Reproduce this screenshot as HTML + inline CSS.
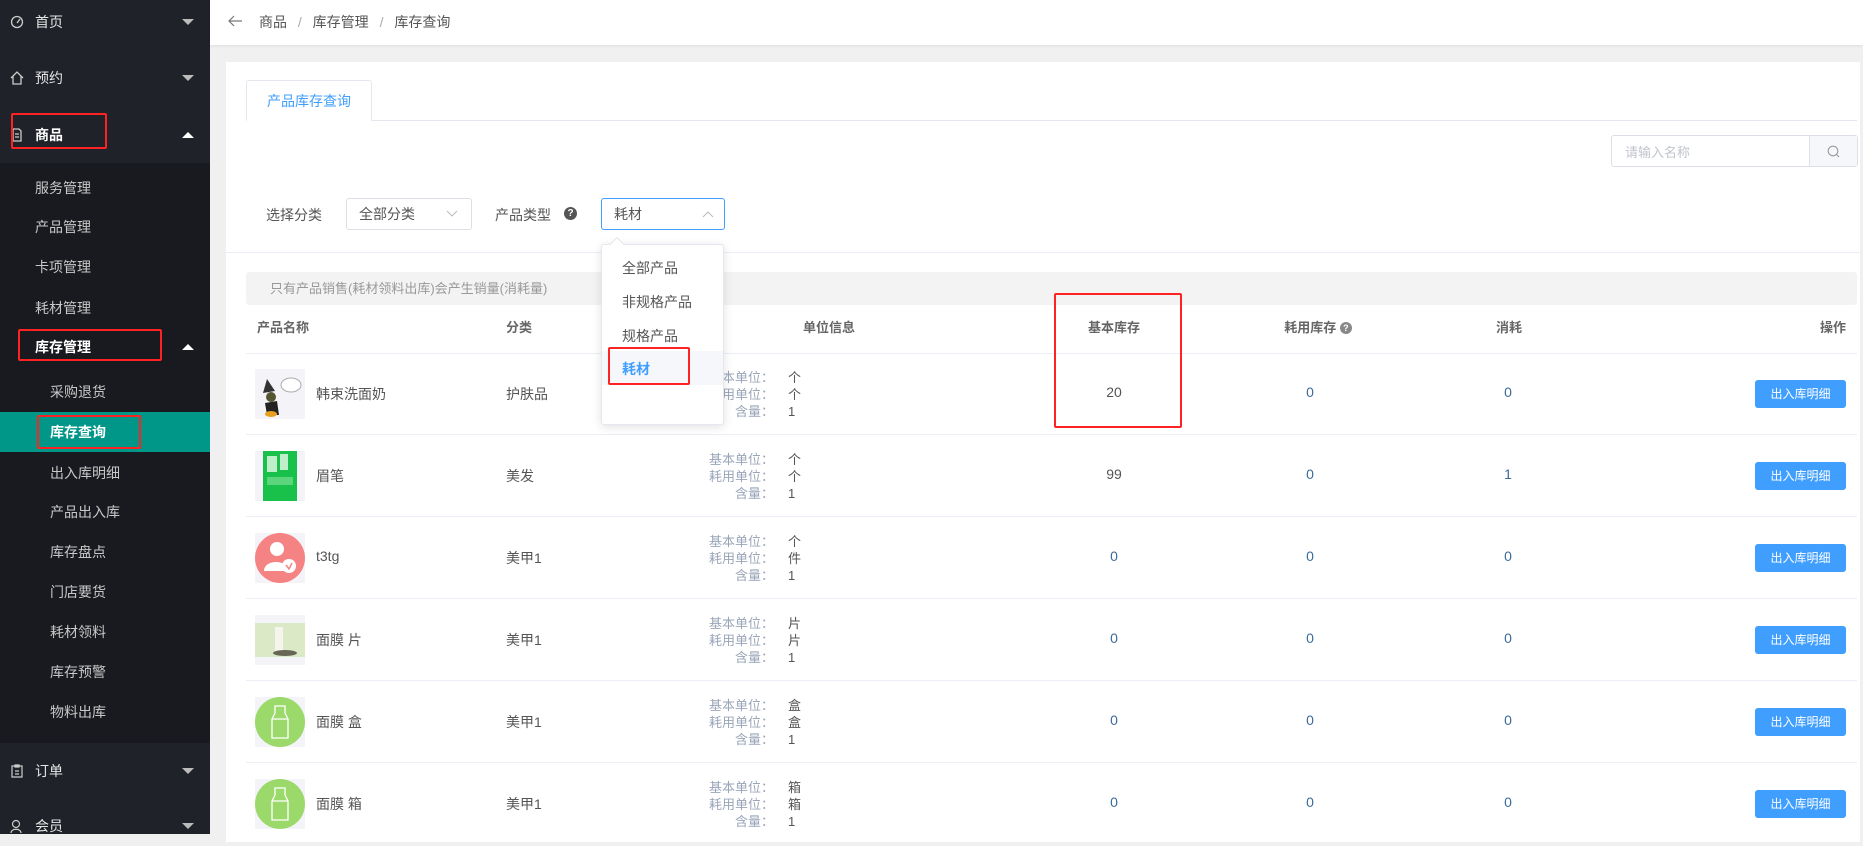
<!DOCTYPE html>
<html><head><meta charset="utf-8"><style>
*{margin:0;padding:0;box-sizing:border-box}
body{width:1863px;height:834px;overflow:hidden;background:#f0f0f0;font-family:"Liberation Sans","Noto Sans CJK SC",sans-serif;font-size:14px;color:#555;position:relative}
.abs{position:absolute}
#side{position:absolute;left:0;top:0;width:210px;height:834px;background:#20222a}
.mi{position:absolute;left:0;width:210px;height:40px;line-height:40px;color:#e6e6e6;font-size:14px}
.mi .t{position:absolute;left:35px}
.mi .ic{position:absolute;left:10px;top:13px;width:14px;height:14px}
.tri{position:absolute;right:16px;top:17px;width:0;height:0;border-left:6px solid transparent;border-right:6px solid transparent;border-top:6px solid #bbb}
.tri.up{border-top:none;border-bottom:6px solid #fff}
#sub{position:absolute;left:0;top:163px;width:210px;height:580px;background:#191a1f}
.si{position:absolute;left:35px;color:#c8c8c8;font-size:14px;height:40px;line-height:40px}
.ssi{position:absolute;left:50px;color:#c8c8c8;font-size:14px;height:40px;line-height:40px}
.red{position:absolute;border:2px solid #f22;border-radius:2px}
#top{position:absolute;left:210px;top:0;right:0;height:45px;background:#fff;box-shadow:0 1px 3px rgba(0,0,0,.08)}
#card{position:absolute;left:226px;top:62px;width:1634px;height:780px;background:#fff;overflow:hidden}
.th{position:absolute;top:257px;font-size:13px;color:#666;font-weight:bold;line-height:18px}
.row{position:absolute;left:20px;width:1611px;height:82px;border-bottom:1px solid #ebeef5}
.cell{position:absolute;font-size:14px;color:#555}
.btn{position:absolute;left:1509px;top:27px;width:91px;height:28px;background:#409eff;color:#fff;font-size:12px;text-align:center;line-height:28px;border-radius:3px}
.ui{position:absolute;left:416px;top:16px;font-size:13px;line-height:17px;color:#9aa5b8;text-align:right;width:112px}
.uv{position:absolute;left:542px;top:16px;font-size:13px;line-height:17px;color:#555}
.img{position:absolute;left:9px;top:16px;width:50px;height:50px;background:#f5f6fa;overflow:hidden}
.num{position:absolute;top:31px;font-size:14px;width:60px;text-align:center}
</style></head><body>
<div id="side">
  <div class="mi" style="top:2px"><svg class="ic" viewBox="0 0 14 14"><circle cx="7" cy="7" r="5.5" fill="none" stroke="#ccc" stroke-width="1.3"/><path d="M7 8 L10 4" stroke="#ccc" stroke-width="1.3"/></svg><span class="t">首页</span><span class="tri"></span></div>
  <div class="mi" style="top:58px"><svg class="ic" viewBox="0 0 14 14"><path d="M1 7 L7 1 L13 7 M3 5 V13 H11 V5" fill="none" stroke="#ccc" stroke-width="1.3"/></svg><span class="t">预约</span><span class="tri"></span></div>
  <div class="mi" style="top:115px;color:#fff;font-weight:bold"><svg class="ic" viewBox="0 0 14 14"><path d="M3 1 H9 L11 3 V13 H3 Z M5 6 H9 M5 9 H9" fill="none" stroke="#ccc" stroke-width="1.3"/></svg><span class="t">商品</span><span class="tri up"></span></div>
  <div id="sub">
    <div class="si" style="top:5px">服务管理</div>
    <div class="si" style="top:44px">产品管理</div>
    <div class="si" style="top:84px">卡项管理</div>
    <div class="si" style="top:125px">耗材管理</div>
    <div class="si" style="top:164px;color:#fff;font-weight:bold">库存管理</div>
    <span class="tri up" style="top:181px"></span>
    <div class="ssi" style="top:209px">采购退货</div>
    <div style="position:absolute;left:0;top:249px;width:210px;height:40px;background:#009688"></div>
    <div class="ssi" style="top:249px;color:#fff;font-weight:bold">库存查询</div>
    <div class="ssi" style="top:290px">出入库明细</div>
    <div class="ssi" style="top:329px">产品出入库</div>
    <div class="ssi" style="top:369px">库存盘点</div>
    <div class="ssi" style="top:409px">门店要货</div>
    <div class="ssi" style="top:449px">耗材领料</div>
    <div class="ssi" style="top:489px">库存预警</div>
    <div class="ssi" style="top:529px">物料出库</div>
  </div>
  <div class="mi" style="top:751px"><svg class="ic" viewBox="0 0 14 14"><path d="M2 2 H12 V13 H2 Z M5 1 H9 V3 H5 Z M5 7 H9 M5 10 H9" fill="none" stroke="#ccc" stroke-width="1.2"/></svg><span class="t">订单</span><span class="tri"></span></div>
  <div class="mi" style="top:806px"><svg class="ic" viewBox="0 0 14 14"><circle cx="6" cy="5" r="3.5" fill="none" stroke="#ccc" stroke-width="1.2"/><path d="M1 14 C1 9 11 9 11 14" fill="none" stroke="#ccc" stroke-width="1.2"/></svg><span class="t">会员</span><span class="tri"></span></div>
</div>
<div class="red" style="left:11px;top:113px;width:96px;height:36px"></div>
<div class="red" style="left:18px;top:329px;width:144px;height:32px"></div>
<div class="red" style="left:37px;top:415px;width:104px;height:34px"></div>

<div id="top">
  <svg class="abs" style="left:17px;top:14px" width="16" height="14" viewBox="0 0 16 14"><path d="M15 7 H2 M7 2 L2 7 L7 12" fill="none" stroke="#777" stroke-width="1.2"/></svg>
  <div class="abs" style="left:49px;top:12px;font-size:14px;color:#555">商品 <span style="color:#aaa;margin:0 7px">/</span> 库存管理 <span style="color:#aaa;margin:0 7px">/</span> 库存查询</div>
</div>

<div id="card">
  <div class="abs" style="left:20px;top:18px;width:126px;height:41px;border:1px solid #e4e7ed;border-bottom:1px solid #fff;border-radius:3px 3px 0 0;background:#fff;z-index:2;color:#409eff;font-size:14px;text-align:center;line-height:40px">产品库存查询</div>
  <div class="abs" style="left:20px;top:58px;width:1611px;height:1px;background:#e4e7ed"></div>
  <div class="abs" style="left:1385px;top:73px;width:247px;height:32px;border:1px solid #dcdfe6;border-radius:3px"></div>
  <div class="abs" style="left:1399px;top:80px;font-size:13px;color:#c0c4cc">请输入名称</div>
  <div class="abs" style="left:1583px;top:74px;width:48px;height:30px;background:#f5f7fa;border-left:1px solid #dcdfe6"></div>
  <svg class="abs" style="left:1601px;top:83px" width="13" height="13" viewBox="0 0 13 13"><circle cx="6" cy="6" r="4.8" fill="none" stroke="#999" stroke-width="1.1"/><path d="M9.5 9.5 L12 12" stroke="#999" stroke-width="1.1"/></svg>

  <div class="abs" style="left:40px;top:143px;font-size:14px;color:#555">选择分类</div>
  <div class="abs" style="left:120px;top:136px;width:126px;height:32px;border:1px solid #dcdfe6;border-radius:3px;padding-left:12px;line-height:30px;font-size:14px">全部分类</div>
  <svg class="abs" style="left:220px;top:148px" width="12" height="8" viewBox="0 0 12 8"><path d="M1 1 L6 6 L11 1" fill="none" stroke="#bbb" stroke-width="1"/></svg>
  <div class="abs" style="left:269px;top:143px;font-size:14px;color:#555">产品类型</div>
  <div class="abs" style="left:338px;top:145px;width:13px;height:13px;border-radius:50%;background:#555;color:#fff;font-size:10px;text-align:center;line-height:13px;font-weight:bold">?</div>
  <div class="abs" style="left:375px;top:136px;width:124px;height:32px;border:1px solid #409eff;border-radius:3px;padding-left:12px;line-height:30px;font-size:14px">耗材</div>
  <svg class="abs" style="left:476px;top:148px" width="12" height="8" viewBox="0 0 12 8"><path d="M1 7 L6 2 L11 7" fill="none" stroke="#bbb" stroke-width="1"/></svg>

  <div class="abs" style="left:0;top:190px;width:1634px;height:1px;background:#ebeef5"></div>
  <div class="abs" style="left:20px;top:210px;width:1611px;height:33px;background:#f3f3f3;border-radius:3px;font-size:13px;color:#999;line-height:33px;padding-left:24px">只有产品销售(耗材领料出库)会产生销量(消耗量)</div>

  <div class="th" style="left:31px">产品名称</div>
  <div class="th" style="left:280px">分类</div>
  <div class="th" style="left:573px;width:60px;text-align:center">单位信息</div>
  <div class="th" style="left:858px;width:60px;text-align:center">基本库存</div>
  <div class="th" style="left:1052px;width:80px;text-align:center">耗用库存 <span style="display:inline-block;width:12px;height:12px;border-radius:50%;background:#888;color:#fff;font-size:9px;line-height:12px;text-align:center;vertical-align:1px">?</span></div>
  <div class="th" style="left:1263px;width:40px;text-align:center">消耗</div>
  <div class="th" style="left:1580px;width:40px;text-align:right">操作</div>
  <div class="abs" style="left:20px;top:291px;width:1611px;height:1px;background:#ebeef5"></div>

  <div class="row" style="top:291px">
    <div class="img"><svg width="50" height="50" viewBox="0 0 50 50"><rect width="50" height="50" fill="#f4f4f8"/><path d="M12 10 L20 22 L8 24 Z" fill="#333"/><circle cx="16" cy="28" r="5" fill="#553"/><path d="M10 34 L22 32 L24 46 L12 46 Z" fill="#222"/><ellipse cx="16" cy="45" rx="6" ry="3" fill="#e8a020"/><ellipse cx="36" cy="16" rx="10" ry="7" fill="#fff" stroke="#aaa"/></svg></div>
    <div class="cell" style="left:70px;top:31px">韩束洗面奶</div>
    <div class="cell" style="left:260px;top:31px">护肤品</div>
    <div class="ui">基本单位：<br>耗用单位：<br>含量：</div><div class="uv">个<br>个<br>1</div>
    <div class="num" style="left:838px;color:#555">20</div>
    <div class="num" style="left:1034px;color:#3a6b9a">0</div>
    <div class="num" style="left:1232px;color:#3a6b9a">0</div>
    <div class="btn">出入库明细</div>
  </div>
  <div class="row" style="top:373px">
    <div class="img"><svg width="50" height="50" viewBox="0 0 50 50"><rect width="50" height="50" fill="#f4f4f8"/><rect x="8" y="0" width="34" height="50" fill="#19c04a"/><rect x="12" y="5" width="10" height="16" fill="#bfeecb"/><rect x="25" y="3" width="8" height="16" fill="#bfeecb"/><rect x="12" y="26" width="26" height="8" fill="#5bd67c"/></svg></div>
    <div class="cell" style="left:70px;top:31px">眉笔</div>
    <div class="cell" style="left:260px;top:31px">美发</div>
    <div class="ui">基本单位：<br>耗用单位：<br>含量：</div><div class="uv">个<br>个<br>1</div>
    <div class="num" style="left:838px;color:#555">99</div>
    <div class="num" style="left:1034px;color:#3a6b9a">0</div>
    <div class="num" style="left:1232px;color:#3a6b9a">1</div>
    <div class="btn">出入库明细</div>
  </div>
  <div class="row" style="top:455px">
    <div class="img"><svg width="50" height="50" viewBox="0 0 50 50"><rect width="50" height="50" fill="#f4f4f8"/><circle cx="25" cy="25" r="25" fill="#f68383"/><circle cx="22" cy="16" r="7" fill="#fff"/><path d="M9 38 C9 26 33 26 33 38 Z" fill="#fff"/><circle cx="34" cy="33" r="7" fill="#fff"/><path d="M31 32 L34 36 L37 30" fill="none" stroke="#f68383" stroke-width="1.5"/></svg></div>
    <div class="cell" style="left:70px;top:31px">t3tg</div>
    <div class="cell" style="left:260px;top:31px">美甲1</div>
    <div class="ui">基本单位：<br>耗用单位：<br>含量：</div><div class="uv">个<br>件<br>1</div>
    <div class="num" style="left:838px;color:#3a6b9a">0</div>
    <div class="num" style="left:1034px;color:#3a6b9a">0</div>
    <div class="num" style="left:1232px;color:#3a6b9a">0</div>
    <div class="btn">出入库明细</div>
  </div>
  <div class="row" style="top:537px">
    <div class="img"><svg width="50" height="50" viewBox="0 0 50 50"><rect width="50" height="50" fill="#f4f4f8"/><rect y="8" width="50" height="34" fill="#dbe9c6"/><rect x="20" y="12" width="8" height="26" fill="#f5f5ee"/><ellipse cx="30" cy="38" rx="12" ry="3" fill="#665"/></svg></div>
    <div class="cell" style="left:70px;top:31px">面膜 片</div>
    <div class="cell" style="left:260px;top:31px">美甲1</div>
    <div class="ui">基本单位：<br>耗用单位：<br>含量：</div><div class="uv">片<br>片<br>1</div>
    <div class="num" style="left:838px;color:#3a6b9a">0</div>
    <div class="num" style="left:1034px;color:#3a6b9a">0</div>
    <div class="num" style="left:1232px;color:#3a6b9a">0</div>
    <div class="btn">出入库明细</div>
  </div>
  <div class="row" style="top:619px">
    <div class="img"><svg width="50" height="50" viewBox="0 0 50 50"><rect width="50" height="50" fill="#f4f4f8"/><circle cx="25" cy="25" r="25" fill="#9bd96a"/><path d="M20 9 H30 V16 L33 22 V41 H17 V22 L20 16 Z M17 22 H33" fill="none" stroke="#fff" stroke-width="1.3"/></svg></div>
    <div class="cell" style="left:70px;top:31px">面膜 盒</div>
    <div class="cell" style="left:260px;top:31px">美甲1</div>
    <div class="ui">基本单位：<br>耗用单位：<br>含量：</div><div class="uv">盒<br>盒<br>1</div>
    <div class="num" style="left:838px;color:#3a6b9a">0</div>
    <div class="num" style="left:1034px;color:#3a6b9a">0</div>
    <div class="num" style="left:1232px;color:#3a6b9a">0</div>
    <div class="btn">出入库明细</div>
  </div>
  <div class="row" style="top:701px">
    <div class="img"><svg width="50" height="50" viewBox="0 0 50 50"><rect width="50" height="50" fill="#f4f4f8"/><circle cx="25" cy="25" r="25" fill="#9bd96a"/><path d="M20 9 H30 V16 L33 22 V41 H17 V22 L20 16 Z M17 22 H33" fill="none" stroke="#fff" stroke-width="1.3"/></svg></div>
    <div class="cell" style="left:70px;top:31px">面膜 箱</div>
    <div class="cell" style="left:260px;top:31px">美甲1</div>
    <div class="ui">基本单位：<br>耗用单位：<br>含量：</div><div class="uv">箱<br>箱<br>1</div>
    <div class="num" style="left:838px;color:#3a6b9a">0</div>
    <div class="num" style="left:1034px;color:#3a6b9a">0</div>
    <div class="num" style="left:1232px;color:#3a6b9a">0</div>
    <div class="btn">出入库明细</div>
  </div>

  <div class="abs" style="left:375px;top:182px;width:123px;height:181px;background:#fff;border:1px solid #e4e7ed;border-radius:3px;box-shadow:0 2px 10px rgba(0,0,0,.12);z-index:5">
    <div style="position:absolute;left:10px;top:-6px;width:10px;height:10px;background:#fff;border-left:1px solid #e4e7ed;border-top:1px solid #e4e7ed;transform:rotate(45deg)"></div>
    <div style="position:absolute;left:20px;top:13px;font-size:14px;color:#555">全部产品</div>
    <div style="position:absolute;left:20px;top:47px;font-size:14px;color:#555">非规格产品</div>
    <div style="position:absolute;left:20px;top:81px;font-size:14px;color:#555">规格产品</div>
    <div style="position:absolute;left:0;top:106px;width:121px;height:34px;background:#f5f7fa"></div>
    <div style="position:absolute;left:20px;top:114px;font-size:14px;color:#409eff;font-weight:bold">耗材</div>
  </div>
</div>
<div class="red" style="left:608px;top:347px;width:82px;height:38px;z-index:9"></div>
<div class="red" style="left:1054px;top:293px;width:128px;height:135px;z-index:9"></div>
</body></html>
